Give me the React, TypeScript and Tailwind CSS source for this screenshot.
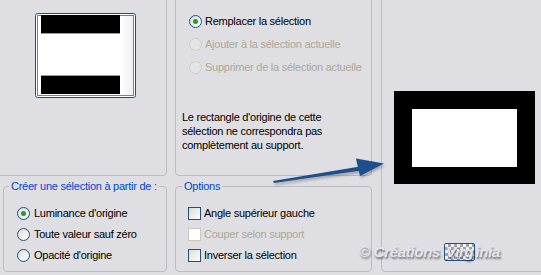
const font = "font-['Liberation_Sans',Arial,sans-serif]"

const Radio = ({ checked = false, disabled = false }: { checked?: boolean; disabled?: boolean }) => (
  <span
    className={
      "flex h-[13px] w-[13px] shrink-0 items-center justify-center rounded-full border " +
      (disabled
        ? "border-[#cfcdc4] bg-[#e4e3e6]"
        : "border-[#1c5180] bg-[linear-gradient(135deg,#dcdcd6,#fff)]")
    }
  >
    {checked && <span className="h-[5px] w-[5px] rounded-full bg-[#21a121]" />}
  </span>
)

const Check = ({ disabled = false }: { disabled?: boolean }) => (
  <span
    className={
      "h-[13px] w-[13px] shrink-0 border " +
      (disabled
        ? "border-[#cac8bb] bg-white"
        : "border-[#1c5180] bg-[linear-gradient(135deg,#dcdcd6,#fff)]")
    }
  />
)

const Thumb = () => (
  <svg width="101" height="85" viewBox="0 0 101 85">
    <defs>
      <linearGradient id="side" x1="0" x2="1">
        <stop offset="0" stopColor="#ffffff" />
        <stop offset="1" stopColor="#eeeef4" />
      </linearGradient>
    </defs>
    <rect x="0.5" y="0.5" width="100" height="84" rx="2" fill="#fff" stroke="#1b4e87" />
    <rect x="85" y="2" width="13" height="80" fill="url(#side)" />
    <rect x="6" y="2" width="79" height="18" fill="#000" />
    <rect x="6" y="20" width="79" height="1" fill="#9a9a9a" />
    <rect x="6" y="62" width="79" height="1" fill="#9a9a9a" />
    <rect x="6" y="63" width="79" height="18" fill="#000" />
    <rect x="2.5" y="2.5" width="96" height="80" fill="none" stroke="#000" strokeDasharray="1 1" />
  </svg>
)

export default function App() {
  return (
    <div className={"relative h-[275px] w-[541px] overflow-hidden whitespace-nowrap bg-[#dfdee3] text-[11px] tracking-[-0.25px] text-black " + font}>
      <div className="flex">
        {/* left column */}
        <div className="ml-[3px] flex w-[164px] shrink-0 flex-col">
          <div className="-mt-[8px] -ml-[12px] h-[184px] w-[176px] rounded-[4px] border border-[#bdbcc2] pt-[20px] pl-[43px]">
            <Thumb />
          </div>
          <fieldset className="mt-[3px] h-[93px] rounded-[4px] border border-[#bdbcc2]">
            <legend className="ml-[5px] px-[2px] leading-[14px] text-[#0046d5]">Créer une sélection à partir de :</legend>
            <div className="flex flex-col pt-[10px] pl-[13px]">
              <div className="flex h-[21px] items-center gap-[4px]">
                <Radio checked />
                <span>Luminance d'origine</span>
              </div>
              <div className="flex h-[21px] items-center gap-[4px]">
                <Radio />
                <span>Toute valeur sauf zéro</span>
              </div>
              <div className="flex h-[21px] items-center gap-[4px]">
                <Radio />
                <span>Opacité d'origine</span>
              </div>
            </div>
          </fieldset>
        </div>

        {/* middle column */}
        <div className="ml-[8px] flex w-[197px] shrink-0 flex-col">
          <div className="-mt-[8px] h-[184px] rounded-[4px] border border-[#bdbcc2] pt-[17px] pl-[13px]">
            <div className="flex h-[23px] items-center gap-[3px]">
              <Radio checked />
              <span>Remplacer la sélection</span>
            </div>
            <div className="flex h-[23px] items-center gap-[3px] text-[#aca899]">
              <Radio disabled />
              <span>Ajouter à la sélection actuelle</span>
            </div>
            <div className="flex h-[23px] items-center gap-[3px] text-[#aca899]">
              <Radio disabled />
              <span>Supprimer de la sélection actuelle</span>
            </div>
            <p className="-ml-[7px] mt-[31px] leading-[14px]">
              Le rectangle d'origine de cette
              <br />
              sélection ne correspondra pas
              <br />
              complètement au support.
            </p>
          </div>
          <fieldset className="mt-[3px] h-[93px] rounded-[4px] border border-[#bdbcc2]">
            <legend className="ml-[6px] px-[2px] leading-[14px] text-[#0046d5]">Options</legend>
            <div className="flex flex-col pt-[10px] pl-[12px]">
              <div className="flex h-[21px] items-center gap-[3px]">
                <Check />
                <span>Angle supérieur gauche</span>
              </div>
              <div className="flex h-[21px] items-center gap-[3px] text-[#aca899]">
                <Check disabled />
                <span>Couper selon support</span>
              </div>
              <div className="flex h-[21px] items-center gap-[3px]">
                <Check />
                <span>Inverser la sélection</span>
              </div>
            </div>
          </fieldset>
        </div>

        {/* right column */}
        <div className="ml-[9px] -mt-[8px] h-[280px] w-[170px] shrink-0 rounded-[4px] border border-[#bdbcc2] pt-[98px] pl-[12px]">
          <div className="h-[93px] w-[141px] bg-black pt-[18px] pl-[18px]">
            <div className="h-[58px] w-[105px] bg-white" />
          </div>
        </div>
      </div>

      {/* annotation arrow */}
      <svg className="absolute left-[268px] top-[150px]" width="124" height="40" viewBox="268 150 124 40">
        <defs>
          <filter id="sh" x="-10%" y="-50%" width="120%" height="200%">
            <feDropShadow dx="1" dy="2" stdDeviation="1.5" floodColor="#000" floodOpacity="0.3" />
          </filter>
        </defs>
        <g filter="url(#sh)" fill="#1d4f8c">
          <polygon points="273,181 360,166.5 361,170.5 274,183" />
          <polygon points="384,163.5 356,158.5 360,176" />
        </g>
      </svg>

      {/* watermark */}
      <div className="absolute left-[359px] top-[241px] flex items-center text-[15px] font-bold italic tracking-[-0.3px] text-[#e4e4ea] [text-shadow:1px_2px_2px_rgba(40,40,50,0.6)]">
        <span>© Créations&nbsp;</span>
        <span className="rounded-[2px] border border-[#1d4f8c] bg-[repeating-conic-gradient(#a2a2aa_0_25%,#f4f4f6_0_50%)] bg-[length:6px_6px] px-[1px] leading-[16px]">
          Virg
        </span>
        <span>inia</span>
      </div>
    </div>
  )
}
